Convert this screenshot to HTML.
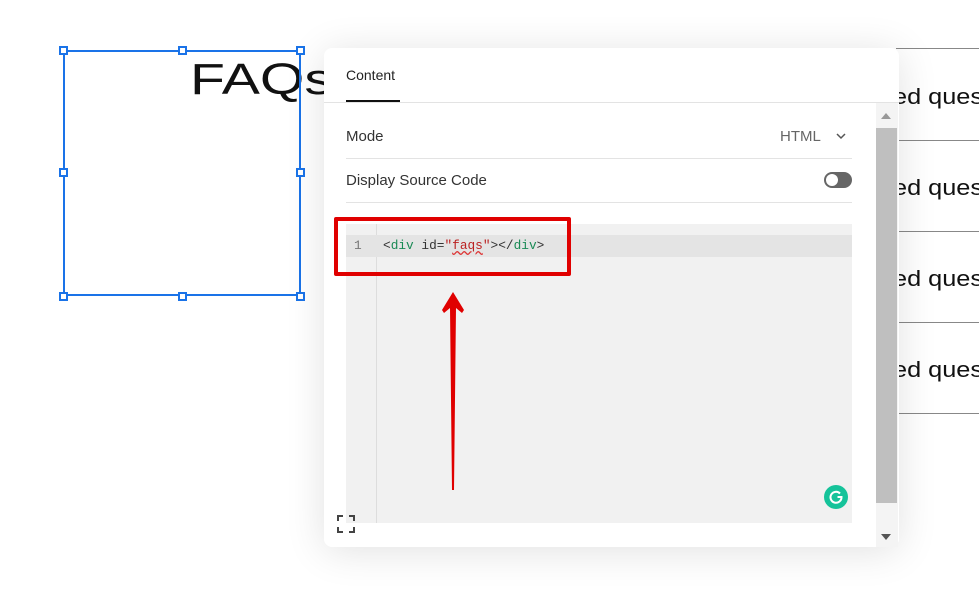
<!DOCTYPE html>
<html><head><style>
body{margin:0;width:979px;height:603px;background:#fff;position:relative;overflow:hidden;font-family:"Liberation Sans",sans-serif}
.a{position:absolute}
.h{position:absolute;border:2px solid #1a73e8;background:#fff;box-sizing:border-box;width:9px;height:9px}
.q{position:absolute;left:893px;font-size:22px;color:#111;white-space:nowrap;transform:scaleX(1.15);transform-origin:left}
.ln{position:absolute;left:896px;width:83px;height:1px;background:#888}
</style></head><body>
<div class="a" style="left:190px;top:55px;font-size:44px;color:#111;transform:scaleX(1.3);transform-origin:left;white-space:nowrap">FAQs</div>
<div class="a" style="left:63px;top:50px;width:238px;height:246px;border:2px solid #1a73e8;box-sizing:border-box"></div>
<div class="h" style="left:59px;top:46px"></div><div class="h" style="left:178px;top:46px"></div><div class="h" style="left:296px;top:46px"></div>
<div class="h" style="left:59px;top:168px"></div><div class="h" style="left:296px;top:168px"></div>
<div class="h" style="left:59px;top:292px"></div><div class="h" style="left:178px;top:292px"></div><div class="h" style="left:296px;top:292px"></div>
<div class="ln" style="top:48px"></div><div class="ln" style="top:140px"></div><div class="ln" style="top:231px"></div><div class="ln" style="top:322px"></div><div class="ln" style="top:413px"></div>
<div class="q" style="top:84px">ed ques</div><div class="q" style="top:175px">ed ques</div><div class="q" style="top:266px">ed ques</div><div class="q" style="top:357px">ed ques</div>
<div class="a" style="left:324px;top:48px;width:575px;height:499px;background:#fff;border-radius:8px;box-shadow:0 4px 40px rgba(0,0,0,0.12)"></div>
<div class="a" style="left:346px;top:67px;font-size:14px;color:#222">Content</div>
<div class="a" style="left:346px;top:100px;width:54px;height:2px;background:#111"></div>
<div class="a" style="left:324px;top:102px;width:575px;height:1px;background:#e3e3e3"></div>
<div class="a" style="left:876px;top:103px;width:22px;height:444px;background:#f4f4f4"></div>
<div class="a" style="left:876px;top:128px;width:21px;height:375px;background:#bfbfbf"></div>
<div class="a" style="left:881px;top:113px;width:0;height:0;border:5px solid transparent;border-bottom:6px solid #999;border-top:0"></div>
<div class="a" style="left:881px;top:534px;width:0;height:0;border:5px solid transparent;border-top:6px solid #555;border-bottom:0"></div>
<div class="a" style="left:346px;top:128px;font-size:15px;color:#333">Mode</div>
<div class="a" style="left:780px;top:128px;font-size:15px;color:#666">HTML</div>
<svg class="a" style="left:835px;top:131px" width="12" height="10"><path d="M2 3l4 4 4-4" stroke="#555" stroke-width="1.5" fill="none"/></svg>
<div class="a" style="left:346px;top:158px;width:506px;height:1px;background:#e3e3e3"></div>
<div class="a" style="left:346px;top:172px;font-size:15px;color:#333">Display Source Code</div>
<div class="a" style="left:824px;top:172px;width:28px;height:16px;border-radius:8px;background:#666"></div>
<div class="a" style="left:826px;top:174px;width:12px;height:12px;border-radius:6px;background:#fff"></div>
<div class="a" style="left:346px;top:202px;width:506px;height:1px;background:#e3e3e3"></div>
<div class="a" style="left:346px;top:224px;width:506px;height:299px;background:#f1f1f1"></div>
<div class="a" style="left:376px;top:224px;width:1px;height:299px;background:#ddd"></div>
<div class="a" style="left:346px;top:235px;width:506px;height:22px;background:#e4e4e4"></div>
<div class="a" style="left:354px;top:238px;font-family:'Liberation Mono',monospace;font-size:12.8px;color:#777">1</div>
<div class="a" style="left:383px;top:238px;font-family:'Liberation Mono',monospace;font-size:12.8px;color:#333;white-space:pre">&lt;<span style="color:#1a8a55">div</span> id=<span style="color:#b22">"<u style="text-decoration:underline wavy #d33">faqs</u>"</span>&gt;&lt;/<span style="color:#1a8a55">div</span>&gt;</div>
<div class="a" style="left:334px;top:217px;width:237px;height:59px;border:4px solid #e00000;border-radius:2px;box-sizing:border-box"></div>
<svg class="a" style="left:436px;top:288px" width="34" height="206"><path d="M17 4 L28 22 L26 25 L20 20 L18 202 L16 202 L14 20 L8 25 L6 22 Z" fill="#e00000"/></svg>
<div class="a" style="left:824px;top:485px;width:24px;height:24px;border-radius:12px;background:#15c39a"></div>
<svg class="a" style="left:824px;top:485px" width="24" height="24"><path d="M16 8.5A5.5 5.5 0 1 0 17.5 12h-4" stroke="#fff" stroke-width="2" fill="none"/></svg>
<svg class="a" style="left:337px;top:515px" width="18" height="18"><path d="M1 6V1h5M12 1h5v5M17 12v5h-5M6 17H1v-5" stroke="#444" stroke-width="2" fill="none"/></svg>
</body></html>
